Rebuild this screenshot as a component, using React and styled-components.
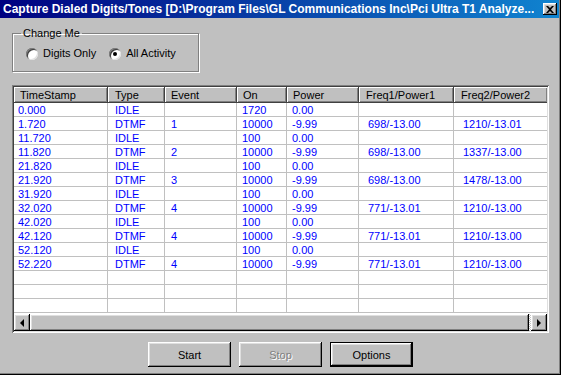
import styled, { createGlobalStyle } from 'styled-components'

const Global = createGlobalStyle`
  html, body { margin: 0; padding: 0; background: #c0c0c0; }
  body { font-family: "Liberation Sans", Arial, sans-serif; font-size: 11px; }
  * { box-sizing: border-box; }
`

const raised = `
  background: #c0c0c0;
  box-shadow: inset -1px -1px #000, inset 1px 1px #fff, inset -2px -2px #808080, inset 2px 2px #dfdfdf;
`

const Window = styled.div`
  width: 561px;
  height: 375px;
  background: #c0c0c0;
  display: flex;
  flex-direction: column;
  box-shadow: inset -1px -1px #000, inset -2px -2px #808080;
`

const TitleBar = styled.div`
  height: 18px;
  margin-right: 2px;
  background: linear-gradient(90deg, #000080, #1084d0);
  display: flex;
  align-items: center;
  justify-content: space-between;
  padding: 0 2px 0 3px;
`

const Title = styled.span`
  color: #fff;
  font-weight: bold;
  font-size: 12px;
  white-space: nowrap;
  overflow: hidden;
`

const CloseButton = styled.div`
  ${raised}
  flex: none;
  width: 14px;
  height: 12px;
  display: flex;
  align-items: center;
  justify-content: center;
`

const Body = styled.div`
  flex: 1;
  display: flex;
  flex-direction: column;
  padding: 9px 12px 0 12px;
`

const GroupBox = styled.fieldset`
  margin: 0;
  width: 187px;
  height: 45px;
  padding: 0 8px;
  border: 1px solid #808080;
  box-shadow: inset 1px 1px #fff, 1px 1px #fff;
`

const Legend = styled.legend`
  padding: 0 2px;
  line-height: 13px;
  color: #000;
`

const RadioRow = styled.div`
  display: flex;
  align-items: center;
  gap: 13px;
  padding: 7px 0 0 5px;
`

const RadioLabel = styled.label`
  display: flex;
  align-items: center;
  gap: 5px;
  line-height: 13px;
  color: #000;
`

const RadioDot = styled.span`
  position: relative;
  width: 12px;
  height: 12px;
  border-radius: 50%;
  background: #fff;
  box-shadow: inset 1px 1px #808080, inset -1px -1px #dfdfdf, inset 2px 2px #404040;
  &::after {
    content: '';
    display: ${p => (p.$checked ? 'block' : 'none')};
    position: absolute;
    left: 4px;
    top: 4px;
    width: 4px;
    height: 4px;
    border-radius: 50%;
    background: #000;
  }
`

const ListFrame = styled.div`
  margin-top: 13px;
  width: 537px;
  height: 248px;
  padding: 2px;
  background: #fff;
  box-shadow: inset 1px 1px #808080, inset -1px -1px #fff, inset 2px 2px #404040, inset -2px -2px #dfdfdf;
  display: flex;
  flex-direction: column;
`

const Rows = styled.div`
  flex: 1;
  overflow: hidden;
`

const cols = '94px 57px 72px 50px 72px 95px 94px'

const HeaderRow = styled.div`
  display: grid;
  grid-template-columns: ${cols};
  height: 16px;
  overflow: hidden;
`

const HeaderCell = styled.div`
  ${raised}
  box-shadow: inset -1px -1px #404040, inset 1px 1px #fff, inset -2px -2px #808080;
  padding-left: ${p => p.$pad}px;
  line-height: 16px;
  color: #000;
  white-space: nowrap;
`

const Row = styled.div`
  display: grid;
  grid-template-columns: ${cols};
  height: 14px;
`

const Cell = styled.div`
  border-right: 1px solid #c0c0c0;
  border-bottom: 1px solid #c0c0c0;
  padding-left: ${p => p.$pad}px;
  line-height: 14px;
  color: #0000ff;
  white-space: nowrap;
  overflow: hidden;
`

const ScrollBar = styled.div`
  height: 17px;
  display: flex;
  background: #c0c0c0;
`

const ArrowButton = styled.div`
  ${raised}
  width: 16px;
  height: 17px;
  display: flex;
  align-items: center;
  justify-content: center;
`

const Arrow = styled.span`
  width: 0;
  height: 0;
  border-top: 4px solid transparent;
  border-bottom: 4px solid transparent;
  ${p => (p.$dir === 'left' ? 'border-right: 4px solid #000;' : 'border-left: 4px solid #000;')}
`

const Thumb = styled.div`
  ${raised}
  flex: 1;
`

const Track = styled.div`
  width: 2px;
  background: repeating-conic-gradient(#fff 0 25%, #c0c0c0 0 50%) 0 0 / 2px 2px;
`

const ButtonRow = styled.div`
  display: flex;
  justify-content: center;
  gap: 8px;
  margin-top: 9px;
`

const Button = styled.button`
  ${raised}
  width: 83px;
  height: 25px;
  border: none;
  font-family: "Liberation Sans", Arial, sans-serif;
  font-size: 11px;
  padding: 0;
  color: ${p => (p.disabled ? '#808080' : '#000')};
  text-shadow: ${p => (p.disabled ? '1px 1px #fff' : 'none')};
  ${p =>
    p.$default &&
    'box-shadow: inset 0 0 0 1px #000, inset -2px -2px #000, inset 2px 2px #fff, inset -3px -3px #808080, inset 3px 3px #dfdfdf;'}
`

const headers = [
  ['TimeStamp', 6],
  ['Type', 7],
  ['Event', 6],
  ['On', 6],
  ['Power', 6],
  ['Freq1/Power1', 7],
  ['Freq2/Power2', 7],
]

const pads = [4, 7, 6, 5, 5, 9, 9]

const data = [
  ['0.000', 'IDLE', '', '1720', '0.00', '', ''],
  ['1.720', 'DTMF', '1', '10000', '-9.99', '698/-13.00', '1210/-13.01'],
  ['11.720', 'IDLE', '', '100', '0.00', '', ''],
  ['11.820', 'DTMF', '2', '10000', '-9.99', '698/-13.00', '1337/-13.00'],
  ['21.820', 'IDLE', '', '100', '0.00', '', ''],
  ['21.920', 'DTMF', '3', '10000', '-9.99', '698/-13.00', '1478/-13.00'],
  ['31.920', 'IDLE', '', '100', '0.00', '', ''],
  ['32.020', 'DTMF', '4', '10000', '-9.99', '771/-13.01', '1210/-13.00'],
  ['42.020', 'IDLE', '', '100', '0.00', '', ''],
  ['42.120', 'DTMF', '4', '10000', '-9.99', '771/-13.01', '1210/-13.00'],
  ['52.120', 'IDLE', '', '100', '0.00', '', ''],
  ['52.220', 'DTMF', '4', '10000', '-9.99', '771/-13.01', '1210/-13.00'],
  ['', '', '', '', '', '', ''],
  ['', '', '', '', '', '', ''],
  ['', '', '', '', '', '', ''],
]

function App() {
  return (
    <Window>
      <Global />
      <TitleBar>
        <Title>Capture Dialed Digits/Tones [D:\Program Files\GL Communications Inc\Pci Ultra T1 Analyze...</Title>
        <CloseButton>
          <svg width="8" height="7" viewBox="0 0 8 7">
            <path d="M0 0h2l2 2 2-2h2L5 3.5 8 7H6L4 5 2 7H0l3-3.5z" fill="#000" />
          </svg>
        </CloseButton>
      </TitleBar>
      <Body>
        <GroupBox>
          <Legend>Change Me</Legend>
          <RadioRow>
            <RadioLabel>
              <RadioDot />
              Digits Only
            </RadioLabel>
            <RadioLabel>
              <RadioDot $checked />
              All Activity
            </RadioLabel>
          </RadioRow>
        </GroupBox>
        <ListFrame>
          <HeaderRow>
            {headers.map(([h, p]) => (
              <HeaderCell key={h} $pad={p}>{h}</HeaderCell>
            ))}
          </HeaderRow>
          <Rows>
            {data.map((r, i) => (
              <Row key={i}>
                {r.map((c, j) => (
                  <Cell key={j} $pad={pads[j]}>{c}</Cell>
                ))}
              </Row>
            ))}
          </Rows>
          <ScrollBar>
            <ArrowButton><Arrow $dir="left" /></ArrowButton>
            <Thumb />
            <Track />
            <ArrowButton><Arrow $dir="right" /></ArrowButton>
          </ScrollBar>
        </ListFrame>
        <ButtonRow>
          <Button>Start</Button>
          <Button disabled>Stop</Button>
          <Button $default>Options</Button>
        </ButtonRow>
      </Body>
    </Window>
  )
}

export default App
